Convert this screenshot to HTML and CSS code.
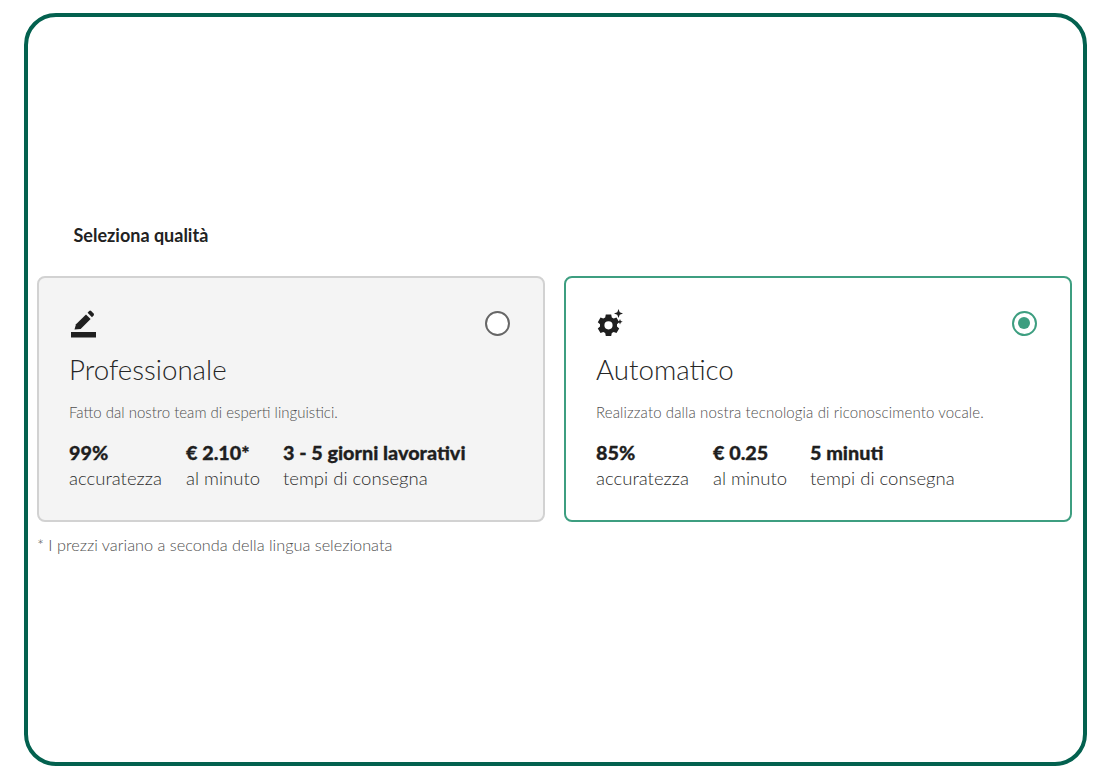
FILE: index.html
```html
<!DOCTYPE html>
<html lang="it">
<head>
<meta charset="utf-8">
<title>Seleziona qualità</title>
<link rel="stylesheet" href="styles.css">
</head>
<body>
<main class="frame">
  <h2 class="heading">Seleziona qualità</h2>
  <div class="cards">
    <section class="card">
      <div class="card-top">
        <svg class="icon" viewBox="0 0 26 28" width="26" height="28" aria-hidden="true">
          <rect x="0" y="22" width="25" height="5.5" fill="#1f1f1f"/>
          <path d="M3.5 19.5 L5 14.2 L15 4.4 L19.6 9 L9.6 19 Z" fill="#1f1f1f"/>
          <path d="M16.6 2.8 L18.2 1 Q19.2 0.2 20.2 1 L22.6 3.6 Q23.4 4.6 22.6 5.6 L21 7.3 Z" fill="#1f1f1f"/>
        </svg>
        <span class="radio"></span>
      </div>
      <h3 class="title">Professionale</h3>
      <p class="desc">Fatto dal nostro team di esperti linguistici.</p>
      <div class="stats">
        <div class="stat"><strong>99%</strong><span>accuratezza</span></div>
        <div class="stat"><strong>€ 2.10*</strong><span>al minuto</span></div>
        <div class="stat"><strong>3 - 5 giorni lavorativi</strong><span>tempi di consegna</span></div>
      </div>
    </section>
    <section class="card selected">
      <div class="card-top">
        <svg class="icon" viewBox="0 0 26 28" width="26" height="28" aria-hidden="true">
          <path fill="#1f1f1f" fill-rule="evenodd" d="M7.8 5.6h5.4l.6 2.9 1.9 1.1 2.8-1 2.7 4.6-2.2 2v2.2l2.2 2-2.7 4.6-2.8-1-1.9 1.1-.6 2.9H7.8l-.6-2.9-1.9-1.1-2.8 1L-.2 19.4l2.2-2v-2.2l-2.2-2 2.7-4.6 2.8 1 1.9-1.1zM10.5 12.2a4.1 4.1 0 1 0 0 8.2 4.1 4.1 0 0 0 0-8.2z"/>
          <path fill="#1f1f1f" d="M20.5 0l1.2 3.3 3.3 1.2-3.3 1.2-1.2 3.3-1.2-3.3-3.3-1.2 3.3-1.2zM22 10l.8 1.9 1.9.8-1.9.8-.8 1.9-.8-1.9-1.9-.8 1.9-.8z"/>
        </svg>
        <span class="radio"></span>
      </div>
      <h3 class="title">Automatico</h3>
      <p class="desc">Realizzato dalla nostra tecnologia di riconoscimento vocale.</p>
      <div class="stats">
        <div class="stat"><strong>85%</strong><span>accuratezza</span></div>
        <div class="stat"><strong>€ 0.25</strong><span>al minuto</span></div>
        <div class="stat"><strong>5 minuti</strong><span>tempi di consegna</span></div>
      </div>
    </section>
  </div>
  <p class="note">* I prezzi variano a seconda della lingua selezionata</p>
</main>
</body>
</html>
```
FILE: styles.css
```css
* { box-sizing: border-box; }
html, body { margin: 0; background: #fff; }
body { padding: 13px 23px 14px 24px; font-family: Lato, "Open Sans", sans-serif; color: #1f1f1f; }
.frame {
  height: 753px;
  border: 4px solid #03614f;
  border-radius: 32px;
  padding: 208px 10px 0 9px;
  overflow: hidden;
}
.heading { margin: 0 0 31px 36.5px; font-size: 18px; line-height: 20px; font-weight: 700; color: #222; }
.cards { display: flex; gap: 19px; }
.card {
  flex: 0 0 508px;
  height: 246px;
  background: #f4f4f4;
  border: 2.5px solid #d2d2d2;
  border-radius: 8px;
  padding: 29px 33px 0 30px;
}
.card.selected { background: #fff; border-color: #3d9e80; }
.card-top { display: flex; justify-content: space-between; align-items: flex-start; height: 28px; }
.icon { margin: 2.5px 0 0 2px; display: block; overflow: visible; }
.selected .icon { margin-top: 1.5px; }
.radio { width: 25px; height: 25px; border-radius: 50%; border: 2.5px solid #666; background: #fff; margin: 4px 0 0 0; }
.selected .radio { border-color: #3d9e80; position: relative; }
.selected .radio::after { content: ""; position: absolute; left: 4px; top: 4px; width: 12px; height: 12px; border-radius: 50%; background: #3d9e80; }
.title { margin: 18px 0 0; font-size: 27.7px; line-height: 34px; font-weight: 300; color: #262626; }
.desc { margin: 16px 0 0; font-size: 15px; line-height: 18px; font-weight: 300; color: #4f4f4f; }
.selected .desc { letter-spacing: 0.13px; }
.stats { display: grid; grid-template-columns: 117px 97px auto; margin-top: 19px; }
.stat { display: flex; flex-direction: column; }
.stat strong { font-size: 19.8px; line-height: 24px; font-weight: 900; color: #1f1f1f; -webkit-text-stroke: 0.3px #1f1f1f; }
.stat span { font-size: 18.5px; line-height: 28px; font-weight: 300; color: #2c2c2c; white-space: nowrap; }
.note { margin: 14px 0 0; font-size: 16.3px; line-height: 18px; font-weight: 300; color: #4f4f4f; }
```
